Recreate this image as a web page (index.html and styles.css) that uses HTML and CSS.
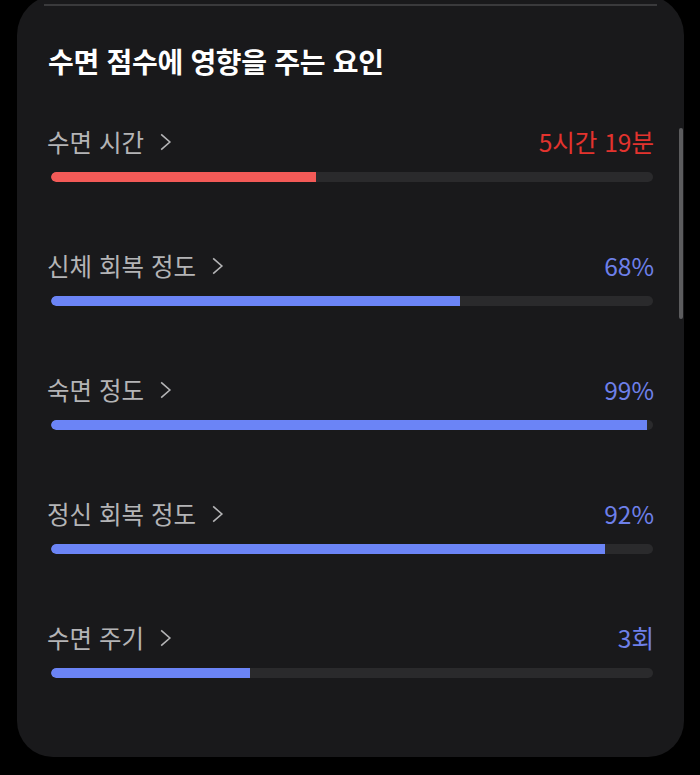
FILE: index.html
```html
<!DOCTYPE html>
<html lang="ko">
<head>
  <meta charset="UTF-8">
  <title>수면 점수에 영향을 주는 요인</title>
  <link rel="stylesheet" href="styles.css">
</head>
<body>
  <div class="card">
    <div class="card-divider"></div>
    <h2 class="card-title">수면 점수에 영향을 주는 요인</h2>

    <ul class="factor-list">
      <li class="factor">
        <div class="factor-head">
          <span class="factor-name">수면 시간
            <svg class="chevron" viewBox="0 0 12 18"><polyline points="2,2 10,9 2,16"/></svg>
          </span>
          <span class="factor-value warn">5시간 19분</span>
        </div>
        <div class="bar"><div class="bar-fill warn" style="width: 44%"></div></div>
      </li>
      <li class="factor">
        <div class="factor-head">
          <span class="factor-name">신체 회복 정도
            <svg class="chevron" viewBox="0 0 12 18"><polyline points="2,2 10,9 2,16"/></svg>
          </span>
          <span class="factor-value">68%</span>
        </div>
        <div class="bar"><div class="bar-fill" style="width: 68%"></div></div>
      </li>
      <li class="factor">
        <div class="factor-head">
          <span class="factor-name">숙면 정도
            <svg class="chevron" viewBox="0 0 12 18"><polyline points="2,2 10,9 2,16"/></svg>
          </span>
          <span class="factor-value">99%</span>
        </div>
        <div class="bar"><div class="bar-fill" style="width: 99%"></div></div>
      </li>
      <li class="factor">
        <div class="factor-head">
          <span class="factor-name">정신 회복 정도
            <svg class="chevron" viewBox="0 0 12 18"><polyline points="2,2 10,9 2,16"/></svg>
          </span>
          <span class="factor-value">92%</span>
        </div>
        <div class="bar"><div class="bar-fill" style="width: 92%"></div></div>
      </li>
      <li class="factor">
        <div class="factor-head">
          <span class="factor-name">수면 주기
            <svg class="chevron" viewBox="0 0 12 18"><polyline points="2,2 10,9 2,16"/></svg>
          </span>
          <span class="factor-value">3회</span>
        </div>
        <div class="bar"><div class="bar-fill" style="width: 33%"></div></div>
      </li>
    </ul>

    <div class="scrollbar"></div>
  </div>
</body>
</html>
```

FILE: styles.css
```css
body {
  margin: 0;
  background: #000;
  font-family: "Noto Sans CJK KR", "Noto Sans", sans-serif;
  overflow: hidden;
}
.card {
  position: relative;
  margin: -5px 16px 0 17px;
  height: 762px;
  box-sizing: border-box;
  padding: 9px 31px 0 34px;
  background: #19191b;
  border-radius: 40px 40px 36px 36px;
}
.card-divider {
  height: 2px;
  margin: 0 -4px 0 -7px;
  background: #3a3a3c;
}
.card-title {
  margin: 36px 0 0 -3px;
  font-size: 28px;
  line-height: 38px;
  font-weight: bold;
  color: #fff;
  letter-spacing: -0.3px;
}
.factor-list {
  list-style: none;
  margin: 46px 0 0 0;
  padding: 0;
  display: flex;
  flex-direction: column;
  gap: 68px;
}
.factor-head {
  display: flex;
  justify-content: space-between;
  align-items: center;
  height: 32px;
  margin-left: -4px;
  margin-right: -1px;
  margin-bottom: 14px;
  font-size: 24.5px;
  line-height: 32px;
}
.factor-name {
  display: flex;
  align-items: center;
  gap: 15px;
  color: #b4b4b6;
}
.chevron {
  width: 13px;
  height: 20px;
  fill: none;
  stroke: #b4b4b6;
  stroke-width: 1.5;
}
.factor-value {
  color: #6e80ea;
}
.factor-value.warn {
  color: #e3332e;
}
.bar {
  height: 10px;
  border-radius: 5px;
  background: #2a2a2c;
  overflow: hidden;
}
.bar-fill {
  height: 100%;
  border-radius: 5px 0 0 5px;
  background: #6b84f6;
}
.bar-fill.warn {
  background: #f35a57;
}
.scrollbar {
  position: absolute;
  right: 1px;
  top: 133px;
  width: 4px;
  height: 191px;
  border-radius: 2px;
  background: #5c5c5e;
}
```
